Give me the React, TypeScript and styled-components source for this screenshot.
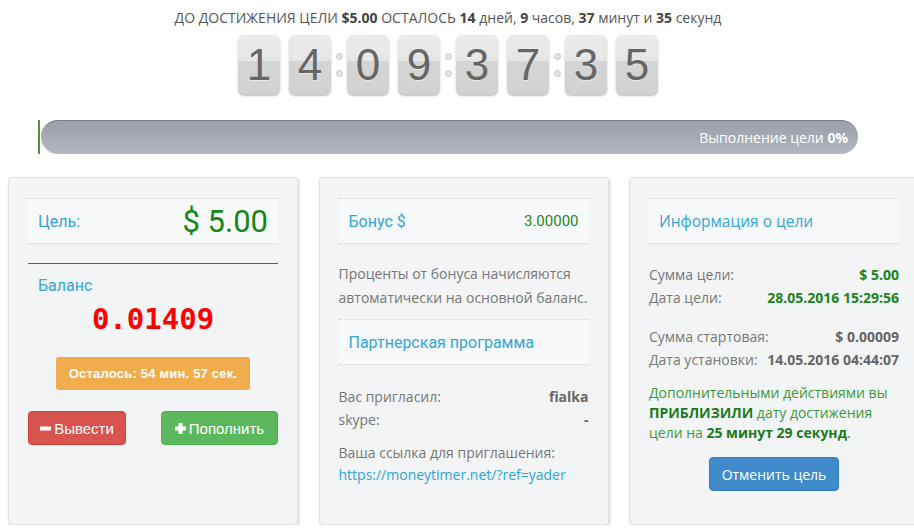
import styled, { createGlobalStyle } from "styled-components";

const GlobalStyle = createGlobalStyle`
  html, body {
    margin: 0;
    padding: 0;
    background: #fff;
    overflow: hidden;
  }
  body {
    font-family: "Open Sans", "Liberation Sans", sans-serif;
    color: #777;
  }
`;

const Page = styled.div`
  width: 896px;
  padding-top: 9px;
`;

const Headline = styled.div`
  text-align: center;
  font-size: 14px;
  line-height: 18px;
  color: #555;

  b {
    color: #444;
    font-weight: 700;
  }
`;

const Clock = styled.div`
  display: flex;
  justify-content: center;
  align-items: center;
  margin-top: 8px;
`;

const ClockGroup = styled.div`
  display: flex;
  align-items: center;
`;

const DigitPair = styled.div`
  display: flex;
  gap: 9px;
`;

const Digit = styled.div`
  width: 42px;
  height: 60px;
  border-radius: 6px;
  background: linear-gradient(to bottom, #ebebeb 0%, #e6e6e6 44%, #d5d5d5 44%, #d2d2d2 100%);
  box-shadow: 0 1px 2px rgba(0, 0, 0, 0.25), inset 0 -1px 0 rgba(0, 0, 0, 0.05);
  display: flex;
  align-items: center;
  justify-content: center;
  font-family: "Liberation Sans", Arial, sans-serif;
  font-size: 44px;
  color: #666;
  text-shadow: 0 1px 0 rgba(255, 255, 255, 0.5);
`;

const Colon = styled.div`
  width: 6px;
  margin: 0 5px;
  display: flex;
  flex-direction: column;
  gap: 10px;
`;

const Dot = styled.span`
  width: 5px;
  height: 5px;
  border-radius: 50%;
  background: #e4e4e4;
  border: 1px solid #c8c8c8;
`;

const ProgressRow = styled.div`
  display: flex;
  margin: 25px 38px 0 38px;
  height: 34px;
`;

const Fill = styled.div`
  width: 2px;
  background: #5b8f3f;
  flex: none;
`;

const Track = styled.div`
  flex: 1;
  margin-left: 1px;
  border-radius: 17px;
  border-top: 1px solid #767b84;
  background: linear-gradient(to bottom, #9a9fa9 0%, #a5aab3 50%, #b4b8c0 100%);
  display: flex;
  align-items: center;
  justify-content: flex-end;
  padding-right: 10px;
  color: #fff;
  font-size: 14px;

  b {
    font-weight: 700;
  }
`;

const Columns = styled.div`
  display: flex;
  gap: 20.5px;
  margin: 23px 0 0 8px;
  width: 920px;
`;

const Card = styled.div`
  flex: none;
  box-sizing: border-box;
  width: 290px;
  height: 348px;
  padding: 20px 19px;
  background: #f2f4f5;
  border: 1px solid #e0e3e5;
  border-radius: 4px;
  box-shadow: 1px 1px 3px rgba(0, 0, 0, 0.18);
  display: flex;
  flex-direction: column;
`;

const InfoBox = styled.div<{ $mt?: number }>`
  height: 44px;
  margin-top: ${(p) => p.$mt ?? 0}px;
  padding: 0 10px;
  background: #f7f9fa;
  border-top: 1px dotted #cfd3d6;
  border-bottom: 1px dotted #cfd3d6;
  display: flex;
  align-items: center;
  justify-content: space-between;
`;

const Label = styled.span<{ $open?: boolean }>`
  font-family: ${(p) => (p.$open ? `"Open Sans"` : "Roboto")}, sans-serif;
  font-size: ${(p) => (p.$open ? 15.5 : 16)}px;
  color: #35a5d7;
`;

const Goal = styled.span`
  font-family: Roboto, sans-serif;
  font-size: 31px;
  color: #138713;
`;

const Bonus = styled.span`
  font-family: Roboto, sans-serif;
  font-size: 15px;
  color: #1f861f;
`;

const RedLine = styled.hr`
  height: 1px;
  margin: 19px 0 0 0;
  padding: 0;
  border: none;
  background-color: #ee2222;
`;

const BalanceTitle = styled.div`
  margin-top: 12px;
  padding-left: 10px;
  font-family: Roboto, sans-serif;
  font-size: 16px;
  line-height: 20px;
  color: #35a5d7;
`;

const Balance = styled.div`
  margin-top: 7px;
  text-align: center;
  font-family: "DejaVu Sans Mono", monospace;
  font-weight: 700;
  font-size: 29px;
  line-height: 32px;
  color: #f00;
`;

const Remain = styled.div`
  align-self: center;
  margin-top: 22px;
  height: 33px;
  padding: 0 13px;
  border-radius: 3px;
  background: #f0ad4e;
  color: #fff;
  font-family: "Liberation Sans", Arial, sans-serif;
  font-weight: 700;
  font-size: 13px;
  letter-spacing: 0.2px;
  display: flex;
  align-items: center;
`;

const ButtonRow = styled.div`
  display: flex;
  justify-content: space-between;
  margin-top: 21px;
`;

const Btn = styled.button<{ $kind: "danger" | "success" | "primary"; $w: number }>`
  width: ${(p) => p.$w}px;
  height: 34px;
  border-radius: 4px;
  border: 1px solid
    ${(p) => (p.$kind === "danger" ? "#d43f3a" : p.$kind === "success" ? "#4cae4c" : "#357ebd")};
  background: ${(p) => (p.$kind === "danger" ? "#d9534f" : p.$kind === "success" ? "#5cb85c" : "#428bca")};
  color: #fff;
  font-family: ${(p) => (p.$kind === "primary" ? `"Open Sans"` : `"Liberation Sans"`)}, Arial, sans-serif;
  font-size: ${(p) => (p.$kind === "primary" ? 14 : 15)}px;
  display: flex;
  align-items: center;
  justify-content: center;
  gap: 3px;
  padding: 0;
  cursor: pointer;
`;

const Paragraph = styled.p<{ $mt: number; $lh: number }>`
  margin: ${(p) => p.$mt}px 0 0 0;
  font-size: 14px;
  line-height: ${(p) => p.$lh}px;
  color: #777;
`;

const Rows = styled.div<{ $mt: number }>`
  margin-top: ${(p) => p.$mt}px;
  display: flex;
  flex-direction: column;
`;

const Row = styled.div`
  display: flex;
  justify-content: space-between;
  font-size: 14px;
  line-height: 23px;
  color: #777;
`;

const Value = styled.b<{ $green?: boolean }>`
  font-weight: 700;
  color: ${(p) => (p.$green ? "#1c841c" : "#666")};
`;

const Link = styled.a`
  color: #2aa6dc;
  text-decoration: none;
`;

const Note = styled.p`
  margin: 12px 0 0 0;
  font-size: 14px;
  line-height: 20px;
  color: #3b993b;

  b {
    color: #1b7a1b;
    font-weight: 700;
  }
`;

const Center = styled.div`
  display: flex;
  justify-content: center;
  margin-top: 14px;
`;

const Minus = () => (
  <svg width="11" height="11" viewBox="0 0 11 11">
    <rect x="0" y="3.5" width="11" height="4" fill="#fff" />
  </svg>
);

const Plus = () => (
  <svg width="11" height="11" viewBox="0 0 11 11">
    <rect x="0" y="3.5" width="11" height="4" fill="#fff" />
    <rect x="3.5" y="0" width="4" height="11" fill="#fff" />
  </svg>
);

const groups = [["1", "4"], ["0", "9"], ["3", "7"], ["3", "5"]];

export default function App() {
  return (
    <>
      <GlobalStyle />
      <Page>
        <Headline>
          ДО ДОСТИЖЕНИЯ ЦЕЛИ <b>$5.00</b> ОСТАЛОСЬ <b>14</b> дней, <b>9</b> часов, <b>37</b> минут и{" "}
          <b>35</b> секунд
        </Headline>
        <Clock>
          {groups.map((pair, i) => (
            <ClockGroup key={i}>
              {i > 0 && (
                <Colon>
                  <Dot />
                  <Dot />
                </Colon>
              )}
              <DigitPair>
                {pair.map((d, j) => (
                  <Digit key={j}>{d}</Digit>
                ))}
              </DigitPair>
            </ClockGroup>
          ))}
        </Clock>
        <ProgressRow>
          <Fill />
          <Track>
            Выполнение цели&nbsp;<b>0%</b>
          </Track>
        </ProgressRow>
      </Page>

      <Columns>
        <Card>
          <InfoBox>
            <Label>Цель:</Label>
            <Goal>$ 5.00</Goal>
          </InfoBox>
          <RedLine />
          <BalanceTitle>Баланс</BalanceTitle>
          <Balance>0.01409</Balance>
          <Remain>Осталось: 54 мин. 57 сек.</Remain>
          <ButtonRow>
            <Btn $kind="danger" $w={98}>
              <Minus />
              Вывести
            </Btn>
            <Btn $kind="success" $w={117}>
              <Plus />
              Пополнить
            </Btn>
          </ButtonRow>
        </Card>

        <Card>
          <InfoBox>
            <Label>Бонус $</Label>
            <Bonus>3.00000</Bonus>
          </InfoBox>
          <Paragraph $mt={18} $lh={24}>
            Проценты от бонуса начисляются автоматически на основной баланс.
          </Paragraph>
          <InfoBox $mt={9}>
            <Label>Партнерская программа</Label>
          </InfoBox>
          <Rows $mt={20}>
            <Row>
              <span>Вас пригласил:</span>
              <Value>fialka</Value>
            </Row>
            <Row>
              <span>skype:</span>
              <Value>-</Value>
            </Row>
          </Rows>
          <Paragraph $mt={11} $lh={22}>
            Ваша ссылка для приглашения:
            <br />
            <Link href="#">https://moneytimer.net/?ref=yader</Link>
          </Paragraph>
        </Card>

        <Card>
          <InfoBox>
            <Label $open>Информация о цели</Label>
          </InfoBox>
          <Rows $mt={19}>
            <Row>
              <span>Сумма цели:</span>
              <Value $green>$ 5.00</Value>
            </Row>
            <Row>
              <span>Дата цели:</span>
              <Value $green>28.05.2016 15:29:56</Value>
            </Row>
          </Rows>
          <Rows $mt={16}>
            <Row>
              <span>Сумма стартовая:</span>
              <Value>$ 0.00009</Value>
            </Row>
            <Row>
              <span>Дата установки:</span>
              <Value>14.05.2016 04:44:07</Value>
            </Row>
          </Rows>
          <Note>
            Дополнительными действиями вы <b>ПРИБЛИЗИЛИ</b> дату достижения цели на <b>25 минут 29 секунд</b>.
          </Note>
          <Center>
            <Btn $kind="primary" $w={130}>
              Отменить цель
            </Btn>
          </Center>
        </Card>
      </Columns>
    </>
  );
}
